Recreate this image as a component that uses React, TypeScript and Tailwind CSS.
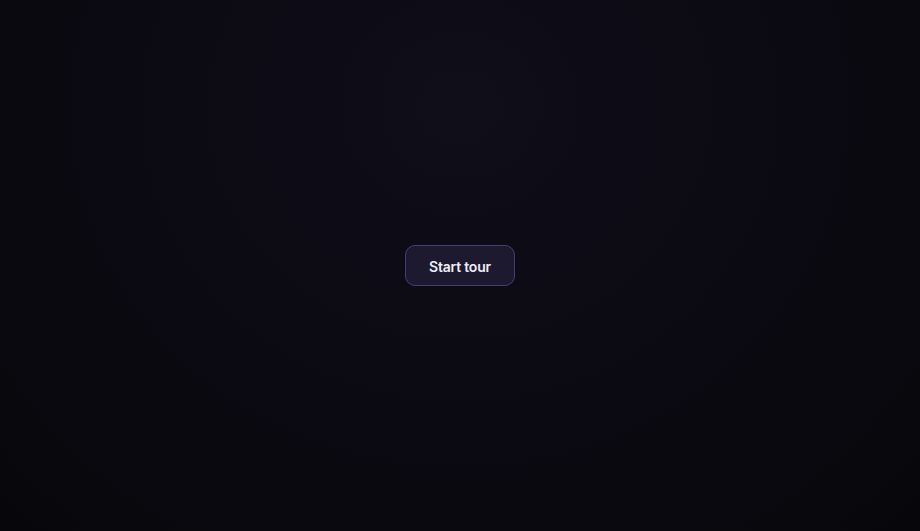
export default function App() {
  return (
    <div className="flex h-[531px] w-full items-center justify-center bg-[radial-gradient(ellipse_at_50%_20%,#0f0e19_0%,#0b0a12_55%,#07070b_100%)] font-['Inter',sans-serif]">
      <button className="h-[41px] w-[110px] rounded-[10px] border border-[#463d78] bg-[#1d1a2f] pt-[2px] text-[14px] font-semibold tracking-[-0.015em] text-[#eeedf7]">
        Start tour
      </button>
    </div>
  );
}
